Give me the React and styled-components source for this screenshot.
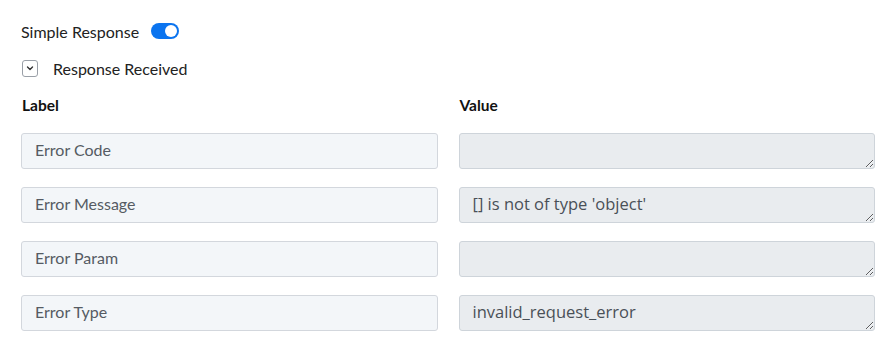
import React, { useState } from "react";
import styled, { createGlobalStyle } from "styled-components";

const GlobalStyle = createGlobalStyle`
  body {
    margin: 0;
    background: #fff;
    font-family: "Lato", "Open Sans", sans-serif;
    color: #1f2328;
  }
`;

const Page = styled.div`
  padding: 18px 10px 0 21px;
`;

const ToggleRow = styled.div`
  display: flex;
  align-items: center;
  gap: 12px;
  height: 26px;
  font-size: 16px;
  color: #222;
`;

const Switch = styled.button`
  position: relative;
  width: 28px;
  height: 16px;
  padding: 0;
  border: none;
  border-radius: 8px;
  background: ${(p) => (p.$on ? "#0b74ef" : "#c8ccd2")};
  cursor: pointer;

  &::after {
    content: "";
    position: absolute;
    top: 2px;
    left: ${(p) => (p.$on ? "14px" : "2px")};
    width: 12px;
    height: 12px;
    border-radius: 50%;
    background: #fff;
  }
`;

const SectionRow = styled.div`
  display: flex;
  align-items: center;
  gap: 15px;
  margin-top: 11px;
  height: 26px;
  font-size: 16px;
  color: #222;
`;

const Chevron = styled.span`
  display: inline-flex;
  align-items: center;
  justify-content: center;
  width: 14px;
  height: 15px;
  margin-left: 1px;
  border: 1px solid #9aa0a8;
  border-radius: 3px;
  color: #333;
`;

const Grid = styled.div`
  display: grid;
  grid-template-columns: 1fr 1fr;
  column-gap: 21px;
  row-gap: 18px;
  margin-top: 14px;
`;

const Heading = styled.div`
  font-size: 15.5px;
  font-weight: 700;
  color: #111;
  padding-left: 1px;
  height: 20px;
  line-height: 20px;
`;

const LabelInput = styled.input`
  box-sizing: border-box;
  width: 100%;
  height: 36px;
  padding: 0 13px 3px;
  border: 1px solid #d3d7dd;
  border-radius: 3px;
  background: #f3f6f9;
  font-family: "Lato", sans-serif;
  font-size: 16px;
  color: #555b63;
  outline: none;
`;

const ValueArea = styled.textarea`
  box-sizing: border-box;
  width: 100%;
  height: 36px;
  padding: 4px 13px;
  border: 1px solid #ced4da;
  border-radius: 3px;
  background: #e9ecef;
  font-family: "Open Sans", sans-serif;
  font-size: 16.5px;
  line-height: 24px;
  color: #495057;
  resize: vertical;
  overflow: hidden;
  display: block;
`;

const rows = [
  { label: "Error Code", value: "" },
  { label: "Error Message", value: "[] is not of type 'object'" },
  { label: "Error Param", value: "" },
  { label: "Error Type", value: "invalid_request_error" },
];

function App() {
  const [on, setOn] = useState(true);

  return (
    <Page>
      <GlobalStyle />
      <ToggleRow>
        Simple Response
        <Switch $on={on} onClick={() => setOn(!on)} aria-label="Simple Response" />
      </ToggleRow>
      <SectionRow>
        <Chevron>
          <svg width="10" height="10" viewBox="0 0 10 10" fill="none">
            <path d="M2.5 4l2.5 2.5L7.5 4" stroke="#333" strokeWidth="1.4" strokeLinecap="round" strokeLinejoin="round" />
          </svg>
        </Chevron>
        Response Received
      </SectionRow>
      <Grid>
        <Heading>Label</Heading>
        <Heading>Value</Heading>
        {rows.map((r) => (
          <React.Fragment key={r.label}>
            <LabelInput defaultValue={r.label} />
            <ValueArea disabled defaultValue={r.value} />
          </React.Fragment>
        ))}
      </Grid>
    </Page>
  );
}

export default App;
